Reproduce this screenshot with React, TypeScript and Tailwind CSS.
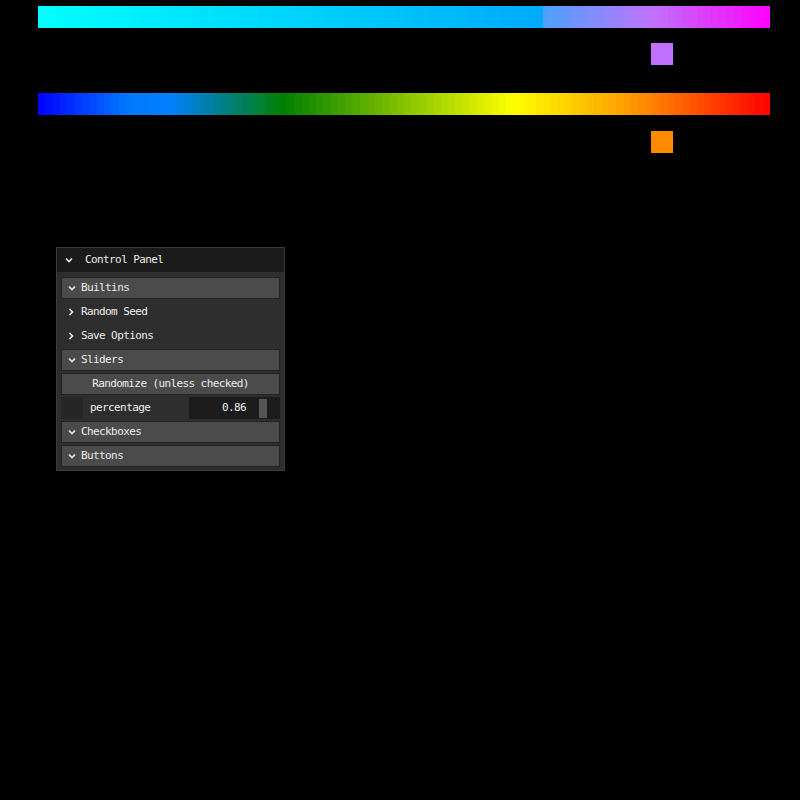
import React from "react";

type Stop = [number, number, number, number];

const topStops: Stop[] = [
  [0, 0, 255, 255],
  [0.688, 0, 170, 255],
  [0.689, 75, 162, 255],
  [0.836, 190, 115, 255],
  [1, 255, 0, 255],
];

const bottomStops: Stop[] = [
  [0, 0, 0, 255],
  [0.12, 0, 120, 255],
  [0.18, 0, 128, 255],
  [0.335, 0, 128, 0],
  [0.65, 255, 255, 0],
  [0.8, 255, 160, 0],
  [1, 255, 0, 0],
];

// Sample a colour on a piecewise-linear ramp
function sample(stops: Stop[], t: number) {
  for (let i = 1; i < stops.length; i++) {
    const a = stops[i - 1];
    const b = stops[i];
    if (t <= b[0]) {
      const k = (t - a[0]) / (b[0] - a[0] || 1);
      const c = [1, 2, 3].map((j) => Math.round(a[j] + (b[j] - a[j]) * k));
      return `rgb(${c[0]},${c[1]},${c[2]})`;
    }
  }
  const l = stops[stops.length - 1];
  return `rgb(${l[1]},${l[2]},${l[3]})`;
}

function RampBar({ stops }: { stops: Stop[] }) {
  const n = 100;
  const w = 732 / n;
  return (
    <svg width={732} height={22} shapeRendering="crispEdges" className="block">
      {Array.from({ length: n }).map((_, i) => (
        <rect
          key={i}
          x={i * w}
          y={0}
          width={w + 0.5}
          height={22}
          fill={sample(stops, (i + 0.5) / n)}
        />
      ))}
    </svg>
  );
}

const ChevronDown = () => (
  <svg width="8" height="6" viewBox="0 0 8 6" className="shrink-0">
    <polyline points="1,1.5 4,4.5 7,1.5" fill="none" stroke="#e8e8e8" strokeWidth="1.6" />
  </svg>
);

const ChevronRight = () => (
  <svg width="6" height="8" viewBox="0 0 6 8" className="shrink-0">
    <polyline points="1.5,1 4.5,4 1.5,7" fill="none" stroke="#e8e8e8" strokeWidth="1.6" />
  </svg>
);

const font = "font-['DejaVu_Sans_Mono',monospace] text-[11px] tracking-[-0.6px]";

function Folder({ label }: { label: string }) {
  return (
    <div className="h-[22px] flex items-center gap-[5px] pl-[6px] bg-[#4b4b4b] border border-[#232323]">
      <ChevronDown />
      <span>{label}</span>
    </div>
  );
}

function Closed({ label }: { label: string }) {
  return (
    <div className="h-[22px] flex items-center gap-[7px] pl-[7px]">
      <ChevronRight />
      <span>{label}</span>
    </div>
  );
}

export default function App() {
  return (
    <div className="min-h-[800px] bg-black pt-[6px] pl-[38px]">
      <RampBar stops={topStops} />
      <div className="mt-[15px] ml-[613px] w-[22px] h-[22px] bg-[#bf70ff]" />
      <div className="mt-[28px]">
        <RampBar stops={bottomStops} />
      </div>
      <div className="mt-[16px] ml-[613px] w-[22px] h-[22px] bg-[#ff8a00]" />

      <div
        className={`mt-[94px] ml-[18px] w-[229px] bg-[#2e2e2e] border border-[#3c3c3c] text-[#ececec] ${font}`}
      >
        <div className="h-[24px] flex items-center gap-[12px] pl-[8px] bg-[#1b1b1b]">
          <ChevronDown />
          <span>Control Panel</span>
        </div>
        <div className="flex flex-col gap-[2px] px-[4px] pt-[5px] pb-[3px]">
          <Folder label="Builtins" />
          <Closed label="Random Seed" />
          <Closed label="Save Options" />
          <Folder label="Sliders" />
          <div className="h-[22px] flex items-center justify-center bg-[#4b4b4b] border border-[#232323]">
            Randomize (unless checked)
          </div>
          <div className="h-[22px] flex items-center">
            <div className="w-[22px] h-[22px] bg-[#262626]" />
            <span className="ml-[7px] flex-1">percentage</span>
            <div className="w-[91px] h-[22px] bg-[#1c1c1c] flex items-center">
              <span className="w-[57px] text-right">0.86</span>
              <div className="ml-[13px] w-[8px] h-[19px] bg-[#555555]" />
            </div>
          </div>
          <Folder label="Checkboxes" />
          <Folder label="Buttons" />
        </div>
      </div>
    </div>
  );
}
